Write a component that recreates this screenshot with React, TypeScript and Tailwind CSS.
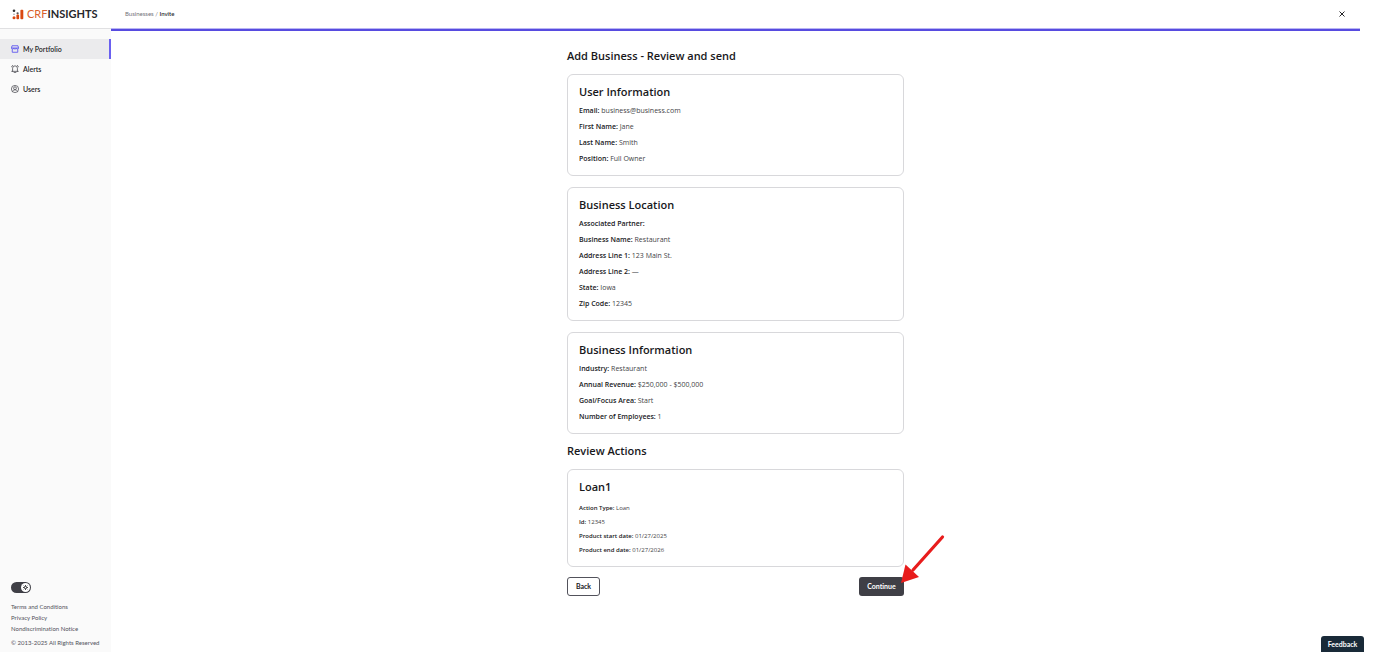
import React from 'react';

interface Field {
  label: string;
  value: string;
}

interface Section {
  title: string;
  fields: Field[];
}

const SECTIONS: Section[] = [
  {
    title: 'User Information',
    fields: [
      { label: 'Email', value: 'business@business.com' },
      { label: 'First Name', value: 'Jane' },
      { label: 'Last Name', value: 'Smith' },
      { label: 'Position', value: 'Full Owner' },
    ],
  },
  {
    title: 'Business Location',
    fields: [
      { label: 'Associated Partner', value: '' },
      { label: 'Business Name', value: 'Restaurant' },
      { label: 'Address Line 1', value: '123 Main St.' },
      { label: 'Address Line 2', value: '—' },
      { label: 'State', value: 'Iowa' },
      { label: 'Zip Code', value: '12345' },
    ],
  },
  {
    title: 'Business Information',
    fields: [
      { label: 'Industry', value: 'Restaurant' },
      { label: 'Annual Revenue', value: '$250,000 - $500,000' },
      { label: 'Goal/Focus Area', value: 'Start' },
      { label: 'Number of Employees', value: '1' },
    ],
  },
];

const LOAN: Field[] = [
  { label: 'Action Type', value: 'Loan' },
  { label: 'Id', value: '12345' },
  { label: 'Product start date', value: '01/27/2025' },
  { label: 'Product end date', value: '01/27/2026' },
];

const LogoMark = () => (
  <svg className="h-[11px] w-[12px] shrink-0" viewBox="0 0 12 11" aria-hidden="true">
    <circle cx="2" cy="1.7" r="1.3" fill="#333" />
    <circle cx="5.600" cy="4.300" r="1.100" fill="#555" />
    <circle cx="2" cy="8.700" r="1.500" fill="#d9480f" />
    <circle cx="2" cy="5.200" r="0.700" fill="#888" />
    <rect x="4.400" y="5.600" width="2.700" height="4.600" rx="1" fill="#d9480f" />
    <rect x="8.400" y="0.800" width="2.900" height="9.400" rx="0.900" fill="#d9480f" />
  </svg>
);

const StoreIcon = () => (
  <svg className="h-2 w-2 shrink-0" viewBox="0 0 16 16" fill="none" stroke="#6058ee" strokeWidth="1.800" strokeLinejoin="round" aria-hidden="true">
    <path d="M2 1.500h12l1 4.500H1z" />
    <path d="M1 6c0 3 4.500 3 4.700 0c.2 3 4.400 3 4.600 0c.2 3 4.700 3 4.700 0" />
    <path d="M2.500 8.500v6h11v-6" />
  </svg>
);

const BellIcon = () => (
  <svg className="h-2 w-2 shrink-0" viewBox="0 0 16 16" fill="none" stroke="#3f3f46" strokeWidth="1.5" strokeLinecap="round" strokeLinejoin="round" aria-hidden="true">
    <path d="M3.200 12.500V6.500a4.800 4.800 0 0 1 9.600 0v6M1.500 12.700h13M6.200 15.200h3.600M1.200 3.800L3 1M14.800 3.800L13 1" />
  </svg>
);

const UserIcon = () => (
  <svg className="h-2 w-2 shrink-0" viewBox="0 0 16 16" fill="none" stroke="#3f3f46" strokeWidth="1.4" aria-hidden="true">
    <circle cx="8" cy="8" r="7.200" />
    <circle cx="8" cy="6.400" r="2.800" />
    <path d="M3 13c1-4.200 9-4.200 10 0" />
  </svg>
);

const NAV = [
  { label: 'My Portfolio', icon: StoreIcon, active: true },
  { label: 'Alerts', icon: BellIcon, active: false },
  { label: 'Users', icon: UserIcon, active: false },
];

const ReviewCard: React.FC<Section> = ({ title, fields }) => (
  <section className="rounded-md border border-[#d8d8db] px-[11px] pt-[9px] pb-2">
    <h2 className="mb-[3px] text-[11px] leading-4 font-semibold">{title}</h2>
    {fields.map((f) => (
      <p key={f.label} className="text-[7px] leading-4 text-[#3f3f46]">
        <strong className="font-semibold text-[#18181b]">{f.label}:</strong> {f.value}
      </p>
    ))}
  </section>
);

const Sidebar = () => (
  <aside className="flex w-[111px] shrink-0 flex-col bg-[#fafafa] font-['Lato',sans-serif]">
    <div className="flex h-[29px] items-center gap-[3px] border-b border-[#e0e0e2] bg-white pl-3">
      <LogoMark />
      <span className="text-[11px] leading-4 text-[#d9602b]">
        CRF<span className="font-bold text-[#26262b]">INSIGHTS</span>
      </span>
    </div>
    <nav className="mt-[10px] flex flex-col">
      {NAV.map(({ label, icon: Icon, active }) => (
        <a
          key={label}
          href="#"
          className={
            active
              ? 'flex h-5 items-center gap-1 border-r-2 border-[#6a60f0] bg-[#ebebed] pl-[11px] text-[7px] font-semibold text-[#27272a]'
              : 'flex h-5 items-center gap-1 pl-[11px] text-[7px] font-semibold text-[#27272a]'
          }
        >
          <Icon />
          {label}
        </a>
      ))}
    </nav>
    <div className="mt-auto flex flex-col items-start pb-1 pl-[11px] text-[6px] leading-[11px] text-[#52525b]">
      <button
        type="button"
        role="switch"
        aria-checked="true"
        aria-label="Theme"
        className="mb-2 flex h-[11px] w-5 items-center justify-end rounded-full bg-[#3f3f46] pr-[1px]"
      >
        <span className="flex h-[9px] w-[9px] items-center justify-center rounded-full bg-white">
          <svg className="h-[5px] w-[5px]" viewBox="0 0 14 14" fill="none" stroke="#27272a" strokeWidth="2.600" aria-hidden="true">
            <circle cx="7" cy="7" r="3" />
            <path d="M7 0v2.500M7 11.500V14M0 7h2.500M11.500 7H14M2 2l1.800 1.800M10.200 10.200L12 12M2 12l1.800-1.800M10.200 3.800L12 2" />
          </svg>
        </span>
      </button>
      <a href="#">Terms and Conditions</a>
      <a href="#">Privacy Policy</a>
      <a href="#">Nondiscrimination Notice</a>
      <p className="mt-[3px]">© 2013-2025 All Rights Reserved</p>
    </div>
  </aside>
);

export default function App() {
  return (
    <div className="flex min-h-screen bg-white font-['Open_Sans',sans-serif] text-[#18181b] [font-variant-ligatures:none]">
      <Sidebar />
      <div className="flex min-w-0 flex-1 flex-col pr-[14px]">
        <header className="flex h-7 items-center justify-between pr-[14px] pl-[14px]">
          <nav className="font-['Lato',sans-serif] text-[6px] leading-3 text-[#71717a]" aria-label="Breadcrumb">
            <a href="#">Businesses</a> / <span className="font-semibold text-[#27272a]">Invite</span>
          </nav>
          <button type="button" aria-label="Close">
            <svg className="h-2 w-2" viewBox="0 0 8 8" fill="none" stroke="#27272a" strokeWidth="1" aria-hidden="true">
              <path d="M1.500 1.500l5 5M6.500 1.500l-5 5" />
            </svg>
          </button>
        </header>
        <div className="h-[3px] border-t border-[#b9b5f3] bg-[#574be0]" />

        <main className="mx-auto w-full max-w-[337px] pt-[17px] pb-4">
          <h1 className="mb-[10px] text-[11px] leading-4 font-semibold">Add Business - Review and send</h1>
          <div className="flex flex-col gap-[11px]">
            {SECTIONS.map((s) => (
              <ReviewCard key={s.title} {...s} />
            ))}
          </div>

          <h2 className="mt-[9px] mb-[10px] text-[11px] leading-4 font-semibold">Review Actions</h2>
          <section className="rounded-md border border-[#d8d8db] px-[11px] pt-[9px] pb-[9px]">
            <h3 className="mb-[6px] text-[11px] leading-4 font-semibold">Loan1</h3>
            {LOAN.map((f) => (
              <p key={f.label} className="text-[6px] leading-[14px] text-[#3f3f46]">
                <strong className="font-semibold text-[#18181b]">{f.label}:</strong> {f.value}
              </p>
            ))}
          </section>

          <div className="mt-[10px] flex justify-between font-['Lato',sans-serif]">
            <button type="button" className="h-[19px] w-[33px] rounded-[3px] border border-[#52525b] text-[7px] font-bold">
              Back
            </button>
            <div className="relative">
              <button type="button" className="block h-[19px] w-[45px] rounded-[3px] bg-[#3f3f46] text-[7px] font-bold text-white">
                Continue
              </button>
              <svg className="pointer-events-none absolute bottom-3 left-[41px] h-[50px] w-[46px]" viewBox="0 0 46 50" aria-hidden="true">
                <path d="M42.500 3L13 36" stroke="#e81c1c" strokeWidth="3.200" strokeLinecap="round" />
                <path d="M1 49L5.500 30.500L19 43z" fill="#e81c1c" />
              </svg>
            </div>
          </div>
        </main>
      </div>

      <button
        type="button"
        className="fixed right-[10px] bottom-0 h-4 w-[43px] rounded-t-[3px] bg-[#192a38] font-['Lato',sans-serif] text-[7px] font-bold text-white"
      >
        Feedback
      </button>
    </div>
  );
}
